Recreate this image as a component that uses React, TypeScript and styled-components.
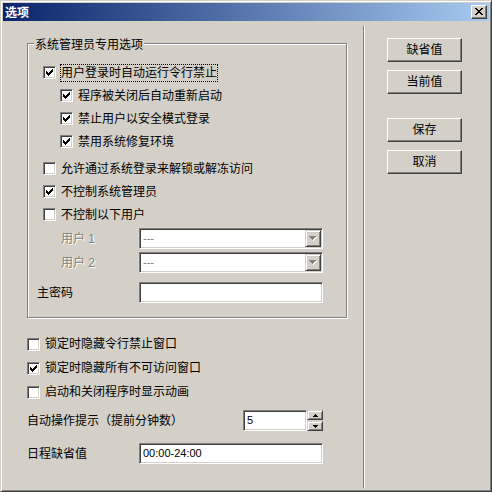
import React from 'react'
import styled, { createGlobalStyle } from 'styled-components'

const face = '#d4d0c8'
const shadow = '#808080'
const darkShadow = '#404040'
const highlight = '#ffffff'

const GlobalStyle = createGlobalStyle`
  html, body {
    margin: 0;
    padding: 0;
    background: ${face};
  }
  body {
    font-family: "Liberation Sans", "Noto Sans CJK SC", sans-serif;
    font-size: 12px;
    color: #000;
  }
  * {
    box-sizing: border-box;
  }
`

const Window = styled.div`
  width: 492px;
  height: 492px;
  display: flex;
  flex-direction: column;
  background: ${face};
  border: 1px solid;
  border-color: ${face} ${darkShadow} ${darkShadow} ${face};
  box-shadow: inset 1px 1px 0 ${highlight}, inset -1px -1px 0 ${shadow};
  padding: 2px;
`

const TitleBar = styled.div`
  height: 18px;
  display: flex;
  align-items: center;
  padding: 0 2px;
  background: linear-gradient(to right, #0a246a, #a6caf0);
`

const TitleText = styled.span`
  color: #fff;
  font-weight: 700;
  font-size: 12px;
  line-height: 14px;
  font-family: "Noto Sans CJK SC", sans-serif;
`

// raised 3D bevel used by every push button
const Raised = styled.div`
  display: flex;
  align-items: center;
  justify-content: center;
  background: ${face};
  border: 1px solid;
  border-color: ${highlight} ${darkShadow} ${darkShadow} ${highlight};
  box-shadow: inset -1px -1px 0 ${shadow};
`

const CloseButton = styled(Raised)`
  width: 16px;
  height: 14px;
  margin-left: auto;
  padding-bottom: 1px;
`

const Body = styled.div`
  flex: 1;
  display: flex;
  min-height: 0;
`

const LeftPane = styled.div`
  width: 360px;
  display: flex;
  flex-direction: column;
  padding: 22px 0 0 24px;
`

const Separator = styled.div`
  width: 2px;
  margin: 5px 0 1px;
  border-left: 1px solid ${shadow};
  border-right: 1px solid ${highlight};
`

const RightPane = styled.div`
  flex: 1;
  display: flex;
  flex-direction: column;
  padding: 17px 0 0 22px;
`

const PushButton = styled(Raised)<{ $gap?: number }>`
  width: 75px;
  height: 24px;
  margin-top: ${(p) => p.$gap ?? 0}px;
  font-size: 12px;
  line-height: 14px;
`

const GroupBox = styled.div`
  position: relative;
  width: 320px;
  height: 275px;
  flex-shrink: 0;
  border: 1px solid ${shadow};
  box-shadow: inset 1px 1px 0 ${highlight}, 1px 1px 0 ${highlight};
  padding: 17px 0 0 9px;
  display: flex;
  flex-direction: column;
`

const GroupLegend = styled.span`
  position: absolute;
  top: -6px;
  left: 6px;
  padding: 0 1px;
  background: ${face};
  line-height: 14px;
`

const CheckRow = styled.div<{ $indent?: number; $gap?: number; $h?: number }>`
  display: flex;
  align-items: center;
  height: ${(p) => p.$h ?? 23}px;
  margin-left: ${(p) => p.$indent ?? 0}px;
  margin-top: ${(p) => p.$gap ?? 0}px;
`

const Box = styled.span`
  width: 13px;
  height: 13px;
  flex-shrink: 0;
  display: flex;
  align-items: center;
  justify-content: center;
  background: #fff;
  border: 1px solid;
  border-color: ${shadow} ${highlight} ${highlight} ${shadow};
  box-shadow: inset 1px 1px 0 ${darkShadow}, inset -1px -1px 0 ${face};
`

const Caption = styled.span<{ $focused?: boolean }>`
  margin-left: 4px;
  line-height: 16px;
  white-space: nowrap;
  border: 1px dotted ${(p) => (p.$focused ? '#000' : 'transparent')};
`

const FieldRow = styled.div<{ $gap?: number }>`
  display: flex;
  align-items: center;
  height: 21px;
  margin-top: ${(p) => p.$gap ?? 0}px;
`

const FieldLabel = styled.span<{ $width: number; $indent?: number; $disabled?: boolean }>`
  width: ${(p) => p.$width}px;
  flex-shrink: 0;
  padding-left: ${(p) => p.$indent ?? 0}px;
  line-height: 16px;
  white-space: nowrap;
  color: ${(p) => (p.$disabled ? shadow : '#000')};
  text-shadow: ${(p) => (p.$disabled ? `1px 1px 0 ${highlight}` : 'none')};
`

const Sunken = styled.div<{ $width: number }>`
  width: ${(p) => p.$width}px;
  height: 21px;
  flex-shrink: 0;
  display: flex;
  align-items: center;
  background: #fff;
  border: 1px solid;
  border-color: ${shadow} ${highlight} ${highlight} ${shadow};
  box-shadow: inset 1px 1px 0 ${darkShadow}, inset -1px -1px 0 ${face};
  padding: 1px;
`

const EditText = styled.span<{ $disabled?: boolean }>`
  flex: 1;
  padding-left: 2px;
  font-size: 11px;
  line-height: 17px;
  color: ${(p) => (p.$disabled ? shadow : '#000')};
`

const DropButton = styled.div`
  width: 16px;
  height: 17px;
  display: flex;
  align-items: center;
  justify-content: center;
  background: ${face};
  border: 1px solid;
  border-color: ${face} ${darkShadow} ${darkShadow} ${face};
  box-shadow: inset 1px 1px 0 ${highlight}, inset -1px -1px 0 ${shadow};
`

const SpinButtons = styled.div`
  width: 16px;
  height: 21px;
  display: flex;
  flex-direction: column;
  justify-content: space-between;
`

const SpinButton = styled(DropButton)`
  height: 10px;
`

const CheckMark = () => (
  <svg width="7" height="7" viewBox="0 0 7 7" shapeRendering="crispEdges">
    <path
      d="M0 2h1v3H0zM1 3h1v3H1zM2 4h1v3H2zM3 3h1v3H3zM4 2h1v3H4zM5 1h1v3H5zM6 0h1v3H6z"
      fill="#000"
    />
  </svg>
)

const Check: React.FC<{ on?: boolean }> = ({ on }) => <Box>{on && <CheckMark />}</Box>

const CloseGlyph = () => (
  <svg width="8" height="7" viewBox="0 0 8 7" shapeRendering="crispEdges">
    <path
      d="M0 0h2v1H0zM6 0h2v1H6zM1 1h2v1H1zM5 1h2v1H5zM2 2h4v1H2zM3 3h2v1H3zM2 4h4v1H2zM1 5h2v1H1zM5 5h2v1H5zM0 6h2v1H0zM6 6h2v1H6z"
      fill="#000"
    />
  </svg>
)

const tri = 'M0 0h7v1H0zM1 1h5v1H1zM2 2h3v1H2zM3 3h1v1H3z'

const DisabledArrow = () => (
  <svg width="8" height="5" viewBox="0 0 8 5" shapeRendering="crispEdges">
    <path d={tri} fill="#fff" transform="translate(1 1)" />
    <path d={tri} fill={shadow} />
  </svg>
)

const SmallArrow: React.FC<{ up?: boolean }> = ({ up }) => (
  <svg width="5" height="3" viewBox="0 0 5 3" shapeRendering="crispEdges">
    <path
      d={up ? 'M2 0h1v1H2zM1 1h3v1H1zM0 2h5v1H0z' : 'M0 0h5v1H0zM1 1h3v1H1zM2 2h1v1H2z'}
      fill="#000"
    />
  </svg>
)

const Combo: React.FC = () => (
  <Sunken $width={184}>
    <EditText $disabled>---</EditText>
    <DropButton>
      <DisabledArrow />
    </DropButton>
  </Sunken>
)

export default function App() {
  return (
    <>
      <GlobalStyle />
      <Window>
        <TitleBar>
          <TitleText>选项</TitleText>
          <CloseButton>
            <CloseGlyph />
          </CloseButton>
        </TitleBar>
        <Body>
          <LeftPane>
            <GroupBox>
              <GroupLegend>系统管理员专用选项</GroupLegend>
              <CheckRow $indent={6}>
                <Check on />
                <Caption $focused>用户登录时自动运行令行禁止</Caption>
              </CheckRow>
              <CheckRow $indent={23}>
                <Check on />
                <Caption>程序被关闭后自动重新启动</Caption>
              </CheckRow>
              <CheckRow $indent={23}>
                <Check on />
                <Caption>禁止用户以安全模式登录</Caption>
              </CheckRow>
              <CheckRow $indent={23}>
                <Check on />
                <Caption>禁用系统修复环境</Caption>
              </CheckRow>
              <CheckRow $indent={6} $gap={4}>
                <Check />
                <Caption>允许通过系统登录来解锁或解冻访问</Caption>
              </CheckRow>
              <CheckRow $indent={6}>
                <Check on />
                <Caption>不控制系统管理员</Caption>
              </CheckRow>
              <CheckRow $indent={6}>
                <Check />
                <Caption>不控制以下用户</Caption>
              </CheckRow>
              <FieldRow $gap={2}>
                <FieldLabel $width={102} $indent={24} $disabled>
                  用户 1
                </FieldLabel>
                <Combo />
              </FieldRow>
              <FieldRow $gap={3}>
                <FieldLabel $width={102} $indent={24} $disabled>
                  用户 2
                </FieldLabel>
                <Combo />
              </FieldRow>
              <FieldRow $gap={9}>
                <FieldLabel $width={102}>主密码</FieldLabel>
                <Sunken $width={184} />
              </FieldRow>
            </GroupBox>

            <CheckRow $gap={14} $h={24}>
              <Check />
              <Caption>锁定时隐藏令行禁止窗口</Caption>
            </CheckRow>
            <CheckRow $h={24}>
              <Check on />
              <Caption>锁定时隐藏所有不可访问窗口</Caption>
            </CheckRow>
            <CheckRow $h={24}>
              <Check />
              <Caption>启动和关闭程序时显示动画</Caption>
            </CheckRow>

            <FieldRow $gap={6}>
              <FieldLabel $width={216}>自动操作提示（提前分钟数）</FieldLabel>
              <Sunken $width={64}>
                <EditText>5</EditText>
              </Sunken>
              <SpinButtons>
                <SpinButton>
                  <SmallArrow up />
                </SpinButton>
                <SpinButton>
                  <SmallArrow />
                </SpinButton>
              </SpinButtons>
            </FieldRow>
            <FieldRow $gap={12}>
              <FieldLabel $width={112}>日程缺省值</FieldLabel>
              <Sunken $width={184}>
                <EditText>00:00-24:00</EditText>
              </Sunken>
            </FieldRow>
          </LeftPane>
          <Separator />
          <RightPane>
            <PushButton>缺省值</PushButton>
            <PushButton $gap={8}>当前值</PushButton>
            <PushButton $gap={24}>保存</PushButton>
            <PushButton $gap={8}>取消</PushButton>
          </RightPane>
        </Body>
      </Window>
    </>
  )
}
